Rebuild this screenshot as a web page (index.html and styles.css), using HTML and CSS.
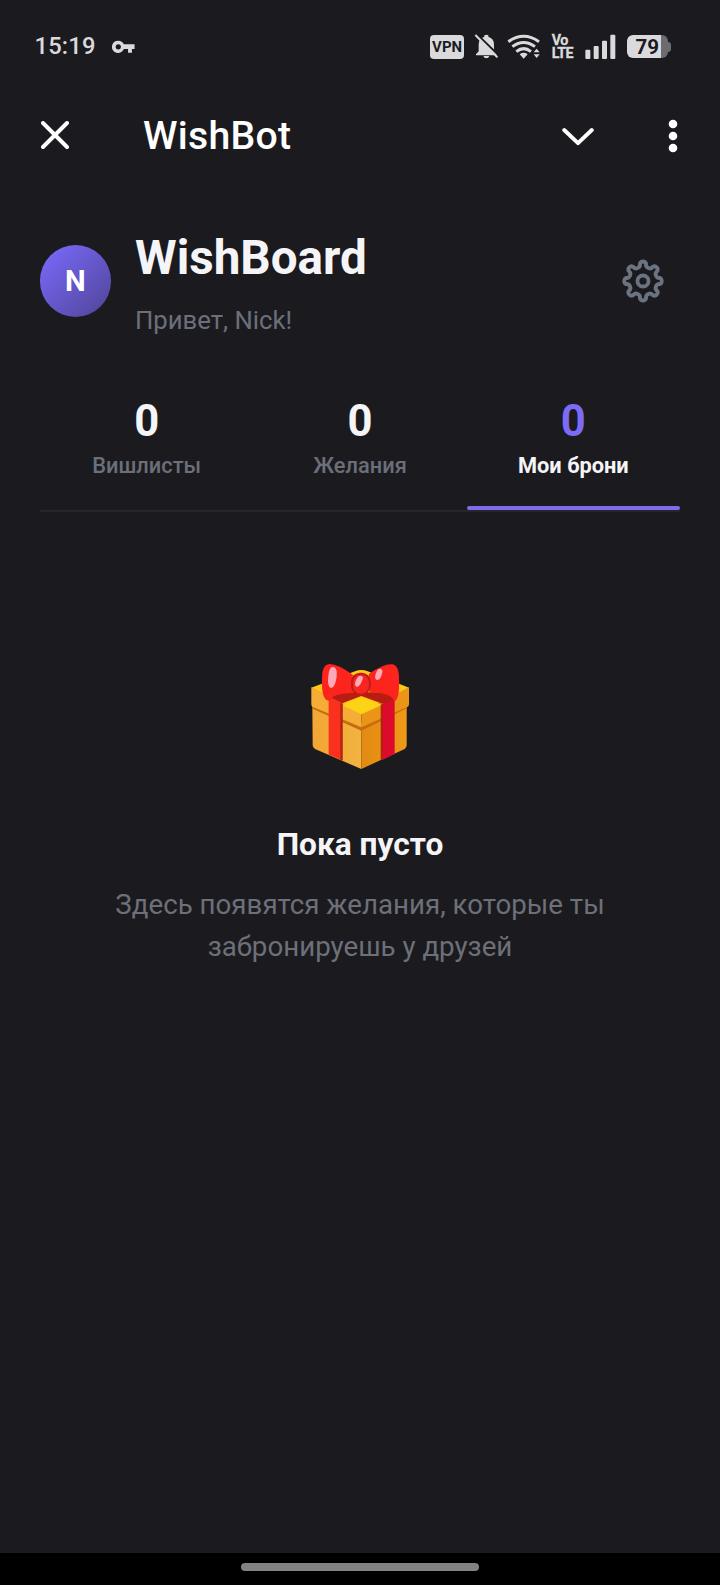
FILE: index.html
```html
<!DOCTYPE html>
<html lang="ru">
<head>
<meta charset="utf-8">
<title>WishBoard</title>
<link rel="stylesheet" href="styles.css">
</head>
<body>
<div class="screen">
  <div class="status">
    <span class="time">15:19</span>
    <svg class="key" viewBox="336 60 70 40"><path fill-rule="evenodd" d="M355 62a19 19 0 1 0 17 26h13v11h12V88h8V73h-33a19 19 0 0 0-17-11zm0 11a8 8 0 1 1 0 16 8 8 0 0 1 0-16z"/></svg>
    <div class="status-icons">
      <span class="vpn">VPN</span>
      <svg class="bell" viewBox="162 26 74 74">
        <path d="M176 78V58q0-19 17-24v-4q6-4 12 0v4q17 5 17 24v20l8 9v3h-62v-3zM190 92h18q-2 7-9 7t-9-7z"/>
        <path class="cut" d="M168 24l70 68"/>
        <path class="slash" d="M166 29l66 67"/>
      </svg>
      <svg class="wifi" viewBox="262 26 102 76">
        <path class="arc" d="M266 49q46-32 92 0M278 64q34-25 68 0M290 79q22-18 44 0"/>
        <path d="M300 87q12-9 24 0l-12 13zM342 81l9-11 9 11zM342 87h18l-9 11z"/>
      </svg>
      <span class="volte"><span>Vo</span><span>LTE</span></span>
      <svg class="signal" viewBox="122 26 92 76"><rect x="123" y="73" width="15" height="28" rx="3"/><rect x="148" y="62" width="15" height="39" rx="3"/><rect x="173" y="46" width="15" height="55" rx="3"/><rect x="198" y="28" width="15" height="73" rx="3"/></svg>
      <span class="battery"><span class="level">79</span></span>
    </div>
  </div>

  <div class="appbar">
    <svg class="close" viewBox="0 0 28 28"><path d="M2 2l24 24M26 2L2 26"/></svg>
    <span class="app-title">WishBot</span>
    <svg class="chevron" viewBox="0 0 32 20"><path d="M2.2 3L16 16.2 29.8 3"/></svg>
    <svg class="more" viewBox="0 0 10 34"><circle cx="5" cy="5" r="4.3"/><circle cx="5" cy="17" r="4.3"/><circle cx="5" cy="29" r="4.3"/></svg>
  </div>

  <div class="header">
    <div class="avatar">N</div>
    <div class="who">
      <h1>WishBoard</h1>
      <p class="hello">Привет, Nick!</p>
    </div>
    <svg class="gear" viewBox="-22 -22 44 44">
      <path d="M16.4-2.9A3.05 3.3 0 0 1 16.4 2.9A3.7 3.7 0 0 0 13.65 9.55A3.05 3.05 0 0 1 9.55 13.65A3.7 3.7 0 0 0 2.9 16.4A3.05 3.3 0 0 1-2.9 16.4A3.7 3.7 0 0 0-9.55 13.65A3.05 3.05 0 0 1-13.65 9.55A3.7 3.7 0 0 0-16.4 2.9A3.05 3.3 0 0 1-16.4-2.9A3.7 3.7 0 0 0-13.65-9.55A3.05 3.05 0 0 1-9.55-13.65A3.7 3.7 0 0 0-2.9-16.4A3.05 3.3 0 0 1 2.9-16.4A3.7 3.7 0 0 0 9.55-13.65A3.05 3.05 0 0 1 13.65-9.55A3.7 3.7 0 0 0 16.4-2.9Z"/>
      <circle r="5.3"/>
    </svg>
  </div>

  <div class="tabs">
    <div class="tab"><span class="count">0</span><span class="label">Вишлисты</span></div>
    <div class="tab"><span class="count">0</span><span class="label">Желания</span></div>
    <div class="tab active"><span class="count">0</span><span class="label">Мои брони</span></div>
  </div>

  <div class="empty">
    <svg class="gift" viewBox="30 25 300 320">
      <defs>
        <linearGradient id="left" x1="0" x2="1"><stop offset="0" stop-color="#f3a634"/><stop offset="1" stop-color="#f2b340"/></linearGradient>
        <linearGradient id="right" x1="0" x2="1"><stop offset="0" stop-color="#e28a13"/><stop offset="1" stop-color="#ef9b17"/></linearGradient>
      </defs>
      <path fill="#fcc916" d="M34 99L165 50Q184 42 203 50L327 99 184 175z"/>
      <path fill="url(#left)" d="M37 145L184 205V343L45 283q-7-4-7-11z"/>
      <path fill="url(#right)" d="M184 205L320 145V271q0 8-6 12L184 343z"/>
      <path fill="#c66c10" d="M38 149L184 213 320 149V161L184 228 38 162z"/>
      <path fill="#f6ad36" d="M34 98L184 175V218L39 157q-5-2-5-8z"/>
      <path fill="#eb9418" d="M184 175L327 98V149q0 6-5 8L184 218z"/>
      <path fill="#fcd315" d="M127 152L184 127 246 151 184 179z"/>
      <path fill="#fb301d" d="M86 124L127 146V317L86 300z"/>
      <path fill="#ae2415" d="M121 144L128 148V318L121 315z"/>
      <path fill="#dd0b2b" d="M246 148L284 130V298L246 316z"/>
      <path fill="#aa2511" d="M242 150L248 147V315L242 317z"/>
      <path fill="#b91d12" d="M90 128q0-12 30-15h120q48 4 51 16-14 12-44 18l-63-23-57 22z"/>
      <path fill="#fc241d" d="M158 60Q112 27 88 28 65 30 66 76q-2 60 20 62 5 1 7-5 8-17 68-18zM207 58q42-30 68-29 22 2 22 41 3 66-15 70-5-26-74-27z"/>
      <rect x="153" y="54" width="59" height="67" rx="27" fill="#bd1b16"/>
      <rect x="159" y="60" width="48" height="57" rx="23" fill="#f72620"/>
      <path fill="#ffa9b6" d="M97 37q17 0 13 29-5 34-17 34-12-3-8-37 3-26 12-26zM182 63q10 1 5 14-8 20-17 20-9-6-2-21 6-13 14-13zM240 42q11 1 6 16-5 18-15 18-9-3-4-18 5-16 13-16z"/>
    </svg>
    <h2>Пока пусто</h2>
    <p class="desc">Здесь появятся желания, которые ты<br>забронируешь у друзей</p>
  </div>

  <div class="navbar"><div class="pill"></div></div>
</div>
</body>
</html>
```
FILE: styles.css
```css
* { box-sizing: border-box; margin: 0; padding: 0; }
body { background: #1b1b1f; font-family: Roboto, "Noto Sans", sans-serif; color: #f5f5f8; }
svg { display: block; flex: none; }
.screen { width: 720px; height: 1585px; display: flex; flex-direction: column; overflow: hidden; }

.status { height: 92px; padding: 0 49.5px 0 34.5px; display: flex; align-items: center; color: #dadadd; }
.time { font-size: 23.7px; font-weight: 500; letter-spacing: 0.2px; width: 77.5px; }
.key { width: 23px; height: 13px; margin-top: 1px; fill: #dadadd; }
.status-icons { margin-left: auto; display: flex; align-items: center; padding-top: 1.5px; }
.vpn { width: 34px; height: 24px; border-radius: 4px; background: #dadadd; color: #1b1b1f; font-size: 15px; font-weight: 700; line-height: 25px; text-align: center; }
.bell { width: 24.7px; height: 24.7px; margin-left: 9.5px; fill: #dadadd; }
.bell .cut { fill: none; stroke: #1b1b1f; stroke-width: 6; }
.bell .slash { fill: none; stroke: #dadadd; stroke-width: 6; }
.wifi { width: 34px; height: 25.3px; margin-left: 9px; fill: #dadadd; }
.wifi .arc { fill: none; stroke: #dadadd; stroke-width: 9; }
.volte { width: 22px; margin-left: 10.5px; display: flex; flex-direction: column; font-size: 14.3px; font-weight: 700; line-height: 13px; letter-spacing: -0.6px; -webkit-text-stroke: 0.3px #dadadd; }
.signal { width: 30.7px; height: 25.3px; margin-left: 11.5px; fill: #dadadd; }
.battery { position: relative; width: 41.5px; height: 23px; margin: 0 2.5px 0 10.5px; border-radius: 6px; background: linear-gradient(90deg, #dadadd 34px, #6b6b70 34px); }
.battery::after { content: ""; position: absolute; left: 41.5px; top: 6.5px; width: 2.5px; height: 10px; border-radius: 0 3px 3px 0; background: #6b6b70; }
.level { display: block; color: #1b1b1f; font-size: 20.5px; font-weight: 700; line-height: 24px; text-align: center; }

.appbar { height: 87px; padding: 0 42.5px 0 41px; display: flex; align-items: center; color: #fff; }
.close, .chevron { fill: none; stroke: #fff; stroke-width: 3.9; stroke-linecap: round; stroke-linejoin: round; }
.close { width: 28px; height: 28px; margin-top: -1px; }
.app-title { margin-left: 74px; font-size: 39.2px; font-weight: 500; letter-spacing: 0.25px; }
.chevron { width: 32px; height: 20px; margin-left: auto; margin-top: 3px; }
.more { width: 10px; height: 34px; margin-left: 74px; margin-top: 0; fill: #fff; }

.header { margin-top: 43.5px; height: 117px; padding: 0 54.5px 0 39.5px; display: flex; align-items: center; }
.avatar { width: 71.5px; height: 71.5px; flex: none; border-radius: 50%; background: linear-gradient(135deg, #7c6bff, #4f4496); color: #fff; font-size: 29.3px; font-weight: 700; line-height: 73px; text-align: center; }
.who { flex: 1; margin-left: 24px; }
h1 { font-size: 47.6px; line-height: 71px; font-weight: 700; }
.hello { margin-top: 7px; font-size: 25.7px; line-height: 38.5px; color: #6d6f79; }
.gear { width: 46px; height: 46px; fill: none; stroke: #6b7280; stroke-width: 3.7; }

.tabs { margin: 43px 40px 0; height: 129.5px; display: flex; border-bottom: 2px solid #25252a; }
.tab { position: relative; flex: 1; padding-top: 14.5px; display: flex; flex-direction: column; align-items: center; }
.count { font-size: 43.6px; line-height: 50px; font-weight: 700; }
.label { margin-top: 1.5px; font-size: 21.8px; line-height: 33px; font-weight: 500; color: #6b6f7a; }
.active .count { color: #7c6bf5; }
.active .label { color: #f5f5f8; font-weight: 700; }
.active::after { content: ""; position: absolute; left: 0; right: 0; bottom: 0; height: 4px; border-radius: 2px; background: #7c6bea; }

.empty { flex: 1; padding-top: 151px; display: flex; flex-direction: column; align-items: center; text-align: center; }
.gift { width: 100px; height: 106.7px; }
h2 { margin-top: 51.3px; font-size: 31.7px; line-height: 48px; font-weight: 700; }
.desc { margin-top: 15.2px; font-size: 27.7px; line-height: 41.5px; color: #6d6f79; }

.navbar { height: 32px; padding-top: 10px; display: flex; justify-content: center; background: #000; }
.pill { width: 238px; height: 8px; border-radius: 4px; background: #838383; }
```
